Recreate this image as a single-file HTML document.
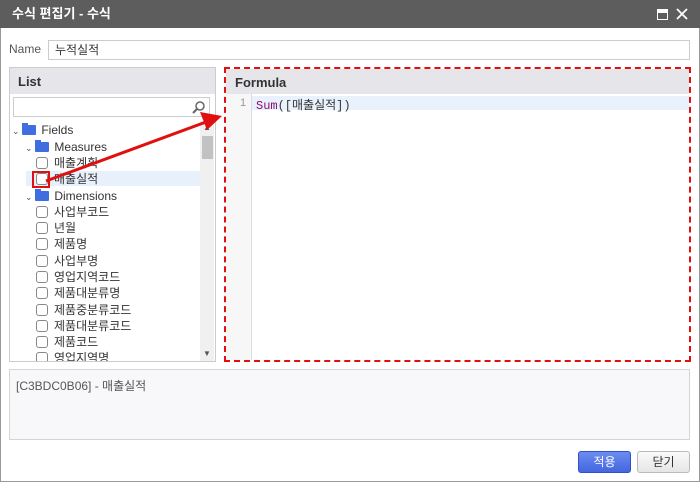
<!DOCTYPE html><html><head><meta charset="utf-8"><style>
*{box-sizing:border-box;margin:0;padding:0}
body{width:700px;height:482px;background:#fff;font-family:"Liberation Sans","Noto Sans CJK KR",sans-serif;font-size:12px;color:#333;position:relative;overflow:hidden}
.a{position:absolute}
.title{left:0;top:0;width:700px;height:28px;background:#5d5d5d;color:#fff;font-weight:bold;font-size:13px;padding:0 12px;line-height:28px}
.row{position:absolute;left:36px;height:16px;line-height:16px;white-space:nowrap}
.cb{display:inline-block;width:12px;height:12px;border:1px solid #888;border-radius:3px;vertical-align:-2px;margin-right:6px;background:#fff}
.fold{display:inline-block;width:14px;height:10px;background:#3f6ee0;vertical-align:-1px;margin-right:2px;border-radius:1px;position:relative}
.fold:before{content:"";position:absolute;left:0;top:-2px;width:6px;height:3px;background:#3f6ee0}
.chev{display:inline-block;width:10px;font-size:9px;color:#555}
</style></head><body>
<div class="a" style="left:0;top:0;width:700px;height:482px;border:1px solid #999"></div>
<div class="a title">수식 편집기 - 수식</div>
<div class="a" style="left:657px;top:9px;width:11px;height:11px;border:1.5px solid #fff;border-top-width:4px"></div>
<svg class="a" style="left:676px;top:8px" width="12" height="12"><path d="M1 1L11 11M11 1L1 11" stroke="#fff" stroke-width="1.8"/></svg>
<div class="a" style="left:9px;top:42px;color:#555">Name</div>
<div class="a" style="left:48px;top:40px;width:642px;height:20px;border:1px solid #ccc;padding:2px 6px;line-height:14px">누적실적</div>
<div class="a" style="left:9px;top:67px;width:207px;height:295px;border:1px solid #ccc"></div>
<div class="a" style="left:10px;top:68px;width:205px;height:26px;background:#e6e6ea;font-weight:bold;font-size:13px;padding:6px 8px">List</div>
<div class="a" style="left:13px;top:97px;width:197px;height:20px;border:1px solid #ccc"></div>
<svg class="a" style="left:192px;top:100px" width="14" height="14"><circle cx="8" cy="6" r="4" fill="none" stroke="#666" stroke-width="1.5"/><line x1="5" y1="9" x2="1" y2="13" stroke="#666" stroke-width="2"/></svg>
<div class="a" style="left:200px;top:121px;width:14px;height:240px;background:#f0f0f0"></div>
<div class="a" style="left:202px;top:136px;width:11px;height:23px;background:#c2c2c2"></div>
<div class="a" style="left:203px;top:123px;font-size:8px;color:#555">▲</div>
<div class="a" style="left:203px;top:349px;font-size:8px;color:#555">▼</div>
<div class="a" style="left:26px;top:171px;width:174px;height:15px;background:#e8f0fb"></div>
<div class="row" style="left:12px;top:122px"><span class="chev">⌄</span><span class="fold"></span> Fields</div>
<div class="row" style="left:25px;top:139px"><span class="chev">⌄</span><span class="fold"></span> Measures</div>
<div class="row" style="top:155px"><span class="cb"></span>매출계획</div>
<div class="row" style="top:171px"><span class="cb"></span>매출실적</div>
<div class="row" style="left:25px;top:188px"><span class="chev">⌄</span><span class="fold"></span> Dimensions</div>
<div class="row" style="top:204px"><span class="cb"></span>사업부코드</div>
<div class="row" style="top:220px"><span class="cb"></span>년월</div>
<div class="row" style="top:236px"><span class="cb"></span>제품명</div>
<div class="row" style="top:253px"><span class="cb"></span>사업부명</div>
<div class="row" style="top:269px"><span class="cb"></span>영업지역코드</div>
<div class="row" style="top:285px"><span class="cb"></span>제품대분류명</div>
<div class="row" style="top:302px"><span class="cb"></span>제품중분류코드</div>
<div class="row" style="top:318px"><span class="cb"></span>제품대분류코드</div>
<div class="row" style="top:334px"><span class="cb"></span>제품코드</div>
<div class="a" style="left:26px;top:350px;width:174px;height:11px;overflow:hidden"><div class="row" style="left:10px;top:0"><span class="cb"></span>영업지역명</div></div>
<div class="a" style="left:32px;top:171px;width:18px;height:17px;border:2px solid #e01010"></div>
<div class="a" style="left:224px;top:67px;width:467px;height:295px;border:2px dashed #e01010"></div>
<div class="a" style="left:226px;top:69px;width:463px;height:25px;background:#e6e6ea;font-weight:bold;font-size:13px;padding:6px 9px">Formula</div>
<div class="a" style="left:226px;top:94px;width:26px;height:266px;background:#f7f7f7;border-right:1px solid #ddd"></div>
<div class="a" style="left:252px;top:96px;width:437px;height:14px;background:#e8f1fc"></div>
<div class="a" style="left:240px;top:97px;color:#999;font-size:11px">1</div>
<div class="a" style="left:256px;top:96px;font-family:'Liberation Mono','Noto Sans CJK KR',monospace;font-size:12px"><span style="color:#8a0f6e">Sum</span>([매출실적])</div>
<svg class="a" style="left:0;top:0" width="700" height="482"><line x1="46" y1="181" x2="206" y2="122" stroke="#e01010" stroke-width="3"/><polygon points="222,116 200,112 207,130" fill="#e01010"/></svg>
<div class="a" style="left:9px;top:369px;width:681px;height:71px;border:1px solid #d5d5d5;background:#f8f8fa;padding:7px 6px;color:#555">[C3BDC0B06] - 매출실적</div>
<div class="a" style="left:578px;top:451px;width:53px;height:22px;border:1px solid #3050c8;border-radius:3px;background:linear-gradient(#6c8cf0,#4466e0);color:#fff;text-align:center;line-height:20px">적용</div>
<div class="a" style="left:637px;top:451px;width:53px;height:22px;border:1px solid #bbb;border-radius:3px;background:linear-gradient(#fafafa,#e6e6e6);text-align:center;line-height:20px">닫기</div>
</body></html>
